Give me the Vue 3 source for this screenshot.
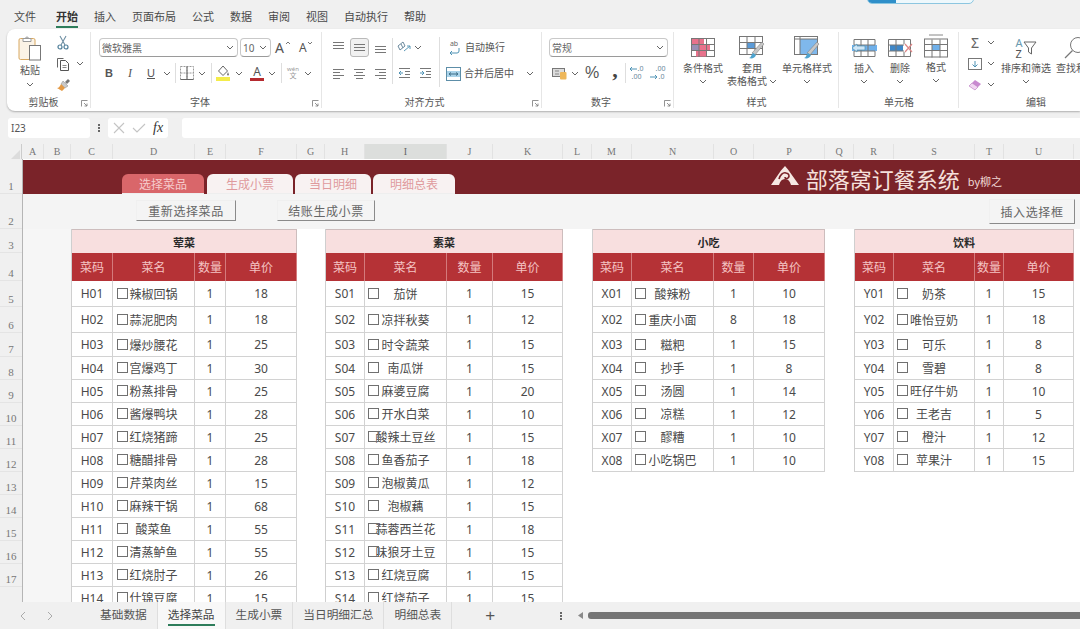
<script setup>
const menus = ['文件', '开始', '插入', '页面布局', '公式', '数据', '审阅', '视图', '自动执行', '帮助']
const columns = 'ABCDEFGHIJKLMNOPQRSTU'.split('')
const rowNumbers = Array.from({ length: 18 }, (_, i) => (i < 17 ? i + 1 : ''))
const heads = ['菜码', '菜名', '数量', '单价']
const sheetTabs = ['基础数据', '选择菜品', '生成小票', '当日明细汇总', '明细总表']

const tables = [
  { key: 't1', title: '荤菜', rows: [
    ['H01', '辣椒回锅', 1, 18], ['H02', '蒜泥肥肉', 1, 18], ['H03', '爆炒腰花', 1, 25], ['H04', '宫爆鸡丁', 1, 30],
    ['H05', '粉蒸排骨', 1, 25], ['H06', '酱爆鸭块', 1, 28], ['H07', '红烧猪蹄', 1, 25], ['H08', '糖醋排骨', 1, 28],
    ['H09', '芹菜肉丝', 1, 15], ['H10', '麻辣干锅', 1, 68], ['H11', '酸菜鱼', 1, 55], ['H12', '清蒸鲈鱼', 1, 55],
    ['H13', '红烧肘子', 1, 26], ['H14', '什锦豆腐', 1, 15] ] },
  { key: 't2', title: '素菜', rows: [
    ['S01', '茄饼', 1, 15], ['S02', '凉拌秋葵', 1, 12], ['S03', '时令蔬菜', 1, 15], ['S04', '南瓜饼', 1, 15],
    ['S05', '麻婆豆腐', 1, 20], ['S06', '开水白菜', 1, 10], ['S07', '酸辣土豆丝', 1, 15], ['S08', '鱼香茄子', 1, 18],
    ['S09', '泡椒黄瓜', 1, 12], ['S10', '泡椒藕', 1, 15], ['S11', '蒜蓉西兰花', 1, 18], ['S12', '味狼牙土豆', 1, 15],
    ['S13', '红烧豆腐', 1, 15], ['S14', '红烧茄子', 1, 15] ] },
  { key: 't3', title: '小吃', rows: [
    ['X01', '酸辣粉', 1, 10], ['X02', '重庆小面', 8, 18], ['X03', '糍粑', 1, 15], ['X04', '抄手', 1, 8],
    ['X05', '汤圆', 1, 14], ['X06', '凉糕', 1, 12], ['X07', '醪糟', 1, 10], ['X08', '小吃锅巴', 1, 10] ] },
  { key: 't4', title: '饮料', rows: [
    ['Y01', '奶茶', 1, 15], ['Y02', '唯怡豆奶', 1, 18], ['Y03', '可乐', 1, 8], ['Y04', '雪碧', 1, 8],
    ['Y05', '旺仔牛奶', 1, 10], ['Y06', '王老吉', 1, 5], ['Y07', '橙汁', 1, 12], ['Y08', '苹果汁', 1, 15] ] }
]
</script>

<template>
  <div class="app">
    <div class="toggle"><span class="toggle-on"></span></div>

    <nav class="menu">
      <span v-for="m in menus" :key="m" class="menu-item" :class="{ active: m === '开始' }">{{ m }}</span>
    </nav>

    <section class="ribbon">
      <!-- 剪贴板 -->
      <div class="group g1">
        <div class="gbody clip">
          <div class="paste">
            <svg width="24" height="26" viewBox="0 0 24 26"><rect x="1" y="3.5" width="16" height="21" rx="1.5" fill="#fbf3e6" stroke="#d8a860"/><path d="M5 3.500h8v3H5z" fill="#fff" stroke="#9a9a9a"/><path d="M7.500 3.500a1.500 1.500 0 0 1 3 0" fill="none" stroke="#9a9a9a"/><rect x="11.500" y="10.500" width="11" height="14.500" fill="#fff" stroke="#777"/></svg>
            <span class="lbl">粘贴</span>
            <svg class="chev" viewBox="0 0 8 5"><path d="M1 1l3 3 3-3"/></svg>
          </div>
          <div class="clip-tools">
            <div class="tool"><svg width="12" height="15" viewBox="0 0 12 15"><path d="M3 1l5 9M9 1L4 10" fill="none" stroke="#6f8fa3" stroke-width="1.100"/><circle cx="3" cy="12" r="2" fill="none" stroke="#4f7f9a" stroke-width="1.200"/><circle cx="9" cy="12" r="2" fill="none" stroke="#4f7f9a" stroke-width="1.200"/></svg></div>
            <div class="tool"><svg width="15" height="14" viewBox="0 0 15 14"><path d="M1.500 10.500v-9h6" fill="none" stroke="#666"/><path d="M4.500 3.500h5l3 3v7h-8z" fill="#fff" stroke="#555"/><path d="M6.500 8.500h4M6.500 10.500h4" stroke="#888"/></svg><svg class="chev" viewBox="0 0 8 5"><path d="M1 1l3 3 3-3"/></svg></div>
            <div class="tool"><svg width="15" height="14" viewBox="0 0 15 14"><path d="M9 4l3-3 2 2-3 3z" fill="#777"/><path d="M7 3l5 5-3 2-4-4z" fill="#c9c9c9" stroke="#888" stroke-width=".5"/><path d="M5 6l4 4-3 3-5-3c2 0 3-2 4-4z" fill="#e49a45"/></svg></div>
          </div>
        </div>
        <div class="glabel">剪贴板<svg class="launch" viewBox="0 0 7 7"><path d="M.5 6.500v-6h6M3 3l3 3M6 3.500V6H3.500"/></svg></div>
      </div>

      <!-- 字体 -->
      <div class="group g2">
        <div class="gbody stack">
          <div class="row-font">
            <div class="select s-font"><span>微软雅黑</span><svg class="chev" viewBox="0 0 8 5"><path d="M1 1l3 3 3-3"/></svg></div>
            <div class="select s-size"><span>10</span><svg class="chev" viewBox="0 0 8 5"><path d="M1 1l3 3 3-3"/></svg></div>
            <span class="grow-a big">A<svg class="caret" viewBox="0 0 6 4"><path d="M1 3l2-2 2 2"/></svg></span>
            <span class="grow-a small">A<svg class="caret" viewBox="0 0 6 4"><path d="M1 1l2 2 2-2"/></svg></span>
          </div>
          <div class="grid-font">
            <b class="fmt">B</b>
            <i class="fmt ital">I</i>
            <u class="fmt">U</u>
            <svg class="chev" viewBox="0 0 8 5"><path d="M1 1l3 3 3-3"/></svg>
            <span class="vsep"></span>
            <svg width="14" height="14" viewBox="0 0 14 14"><path d="M.5.500h13v13H.500zM7 .500v13M.500 7h13" fill="none" stroke="#999" stroke-dasharray="2 1"/><path d="M.5 13.500h13M7 .500v13" stroke="#666" fill="none"/></svg>
            <svg class="chev" viewBox="0 0 8 5"><path d="M1 1l3 3 3-3"/></svg>
            <span class="vsep"></span>
            <svg width="14" height="16" viewBox="0 0 14 16"><path d="M7 1l4.500 5L7 10.500 2.500 6z" fill="#fff" stroke="#666"/><path d="M12 7l1 2.500a1 1 0 0 1-2 0z" fill="#777"/><rect x="0" y="12" width="14" height="4" fill="#f4ec4a"/></svg>
            <svg class="chev" viewBox="0 0 8 5"><path d="M1 1l3 3 3-3"/></svg>
            <span class="color-a">A<em></em></span>
            <svg class="chev" viewBox="0 0 8 5"><path d="M1 1l3 3 3-3"/></svg>
            <span class="vsep"></span>
            <span class="wen"><small>wén</small>文</span>
            <svg class="chev" viewBox="0 0 8 5"><path d="M1 1l3 3 3-3"/></svg>
          </div>
        </div>
        <div class="glabel">字体<svg class="launch" viewBox="0 0 7 7"><path d="M.5 6.500v-6h6M3 3l3 3M6 3.500V6H3.500"/></svg></div>
      </div>

      <!-- 对齐方式 -->
      <div class="group g3">
        <div class="gbody align">
          <div class="grid-align">
            <svg class="al" viewBox="0 0 13 13"><path d="M1 1.500h11M1 4.500h11M1 7.500h11"/></svg>
            <span class="al-on"><svg class="al" viewBox="0 0 13 13"><path d="M1 3.500h11M1 6.500h11M1 9.500h11"/></svg></span>
            <svg class="al" viewBox="0 0 13 13"><path d="M1 5.500h11M1 8.500h11M1 11.500h11"/></svg>
            <span class="vsep tall"></span>
            <svg width="15" height="13" viewBox="0 0 15 13"><path d="M1 5l5-4 2 4-5 4zM4 3l2 4" fill="none" stroke="#6c8a9e"/><path d="M7 10l6-5M13 5h-3M13 5v3" fill="none" stroke="#5d9ab8"/></svg>
            <svg class="chev start" viewBox="0 0 8 5"><path d="M1 1l3 3 3-3"/></svg>
            <svg class="al" viewBox="0 0 13 13"><path d="M1 2.500h11M1 5.500h7M1 8.500h11M1 11.500h7"/></svg>
            <svg class="al" viewBox="0 0 13 13"><path d="M1 2.500h11M3 5.500h7M1 8.500h11M3 11.500h7"/></svg>
            <svg class="al" viewBox="0 0 13 13"><path d="M1 2.500h11M5 5.500h7M1 8.500h11M5 11.500h7"/></svg>
            <svg class="al" viewBox="0 0 13 13"><path d="M1 1.500h11M7 4.500h5M7 7.500h5M1 10.500h11"/><path class="blue" d="M5 6H1M1 6l2-2M1 6l2 2"/></svg>
            <svg class="al" viewBox="0 0 13 13"><path d="M1 1.500h11M7 4.500h5M7 7.500h5M1 10.500h11"/><path class="blue" d="M1 6h4M5 6L3 4M5 6L3 8"/></svg>
          </div>
          <span class="vsep tall-2"></span>
          <div class="wrap-col">
            <div class="wrap-row"><span class="wrap-ic"><small>ab</small><svg width="13" height="7" viewBox="0 0 13 7"><path d="M11 0v3a2 2 0 0 1-2 2H2M2 5l2-2M2 5l2 2" fill="none" stroke="#4f93b5"/></svg></span><span class="lbl">自动换行</span></div>
            <div class="wrap-row"><svg width="15" height="14" viewBox="0 0 15 14"><rect x=".5" y=".5" width="14" height="13" fill="#fff" stroke="#5d8ea8"/><rect x="1" y="4" width="13" height="6" fill="#a9d3ea"/><path d="M3 7h9M3 7l2-1.500M3 7l2 1.500M12 7l-2-1.500M12 7l-2 1.500" fill="none" stroke="#3f6f88"/></svg><span class="lbl">合并后居中</span><svg class="chev ml" viewBox="0 0 8 5"><path d="M1 1l3 3 3-3"/></svg></div>
          </div>
        </div>
        <div class="glabel">对齐方式<svg class="launch" viewBox="0 0 7 7"><path d="M.5 6.500v-6h6M3 3l3 3M6 3.500V6H3.500"/></svg></div>
      </div>

      <!-- 数字 -->
      <div class="group g4">
        <div class="gbody stack">
          <div class="select s-num"><span>常规</span><svg class="chev" viewBox="0 0 8 5"><path d="M1 1l3 3 3-3"/></svg></div>
          <div class="grid-num">
            <svg width="15" height="13" viewBox="0 0 15 13"><rect x=".5" y="1.500" width="12" height="8" fill="#dcdcdc" stroke="#777"/><path d="M3 4h4M3 7h4" stroke="#888"/><rect x="8" y="5" width="6.500" height="7.500" rx="1" fill="#eeb75a"/></svg>
            <svg class="chev" viewBox="0 0 8 5"><path d="M1 1l3 3 3-3"/></svg>
            <span class="pct">%</span>
            <span class="comma">,</span>
            <span class="vsep"></span>
            <span class="dec"><svg width="8" height="6" viewBox="0 0 8 6"><path d="M8 3H1M1 3l2-2M1 3l2 2" fill="none" stroke="#4f93b5"/></svg><small>.0</small><small class="low">.00</small></span>
            <span class="dec"><small class="hi">.00</small><svg width="8" height="6" viewBox="0 0 8 6"><path d="M0 3h7M7 3L5 1M7 3L5 5" fill="none" stroke="#4f93b5"/></svg><small>.0</small></span>
          </div>
        </div>
        <div class="glabel">数字<svg class="launch" viewBox="0 0 7 7"><path d="M.5 6.500v-6h6M3 3l3 3M6 3.500V6H3.500"/></svg></div>
      </div>

      <!-- 样式 -->
      <div class="group g5">
        <div class="gbody bigs">
          <div class="bigbtn w48">
            <svg width="24" height="20" viewBox="0 0 24 20"><rect x=".5" y=".5" width="23" height="18" fill="#fff" stroke="#777"/><rect x="1" y="1" width="12" height="5.500" fill="#e8728c"/><rect x="1" y="6.500" width="7" height="6" fill="#9a8fb5"/><rect x="8" y="6.500" width="11" height="6" fill="#e8728c"/><rect x="5" y="12.500" width="10" height="6" fill="#e8728c"/><path d="M8 1v18M15.500 1v18M1 6.500h22M1 12.500h22" stroke="#777" fill="none"/></svg>
            <span class="lbl">条件格式</span>
            <svg class="chev" viewBox="0 0 8 5"><path d="M1 1l3 3 3-3"/></svg>
          </div>
          <div class="bigbtn w50">
            <svg width="26" height="24" viewBox="0 0 26 24"><rect x=".5" y=".5" width="23" height="18" fill="#fff" stroke="#777"/><rect x="8" y="6.500" width="8" height="6" fill="#5b9bd8"/><path d="M8 1v18M16 1v18M1 6.500h22M1 12.500h22" stroke="#777" fill="none"/><path d="M13 17l10-11 2 2-9 11z" fill="#c7c7c7" stroke="#777" stroke-width=".5"/><path d="M10 22c2 0 2-3 4-5l3 2c-1 3-4 4-7 3z" fill="#4da3cf"/></svg>
            <span class="lbl">套用</span>
            <span class="lbl tail">表格格式<svg class="chev" viewBox="0 0 8 5"><path d="M1 1l3 3 3-3"/></svg></span>
          </div>
          <div class="bigbtn w60">
            <svg width="26" height="24" viewBox="0 0 26 24"><rect x=".5" y=".5" width="23" height="18" fill="#fff" stroke="#777"/><rect x="6" y="3" width="17" height="15" fill="#7fb8ec"/><path d="M6 1v18M1 3h22" stroke="#777" fill="none"/><path d="M13 17l10-11 2 2-9 11z" fill="#c7c7c7" stroke="#777" stroke-width=".5"/><path d="M10 22c2 0 2-3 4-5l3 2c-1 3-4 4-7 3z" fill="#4da3cf"/></svg>
            <span class="lbl">单元格样式</span>
            <svg class="chev" viewBox="0 0 8 5"><path d="M1 1l3 3 3-3"/></svg>
          </div>
        </div>
        <div class="glabel">样式</div>
      </div>

      <!-- 单元格 -->
      <div class="group g6">
        <div class="gbody bigs">
          <div class="bigbtn w36">
            <svg width="27" height="20" viewBox="0 0 27 20"><path d="M3 1.500h21v17H3z" fill="#fff" stroke="#777"/><rect x="1" y="7" width="25" height="6" fill="#6fb0ea"/><path d="M10 1v18M17 1v18M3 7h21M3 13h21" stroke="#777" fill="none"/><path d="M1 10l5-4v2h8v4H6v2z" fill="#cfe6f7" stroke="#4f93b5" stroke-width=".7"/></svg>
            <span class="lbl">插入</span>
            <svg class="chev" viewBox="0 0 8 5"><path d="M1 1l3 3 3-3"/></svg>
          </div>
          <div class="bigbtn w36">
            <svg width="27" height="20" viewBox="0 0 27 20"><path d="M1.500 1.500h22v17h-22z" fill="#fff" stroke="#777"/><rect x="3" y="7" width="13" height="6" fill="#3f87c8"/><path d="M9 1v18M17 1v5M17 14v5M1 7h16M1 13h16" stroke="#777" fill="none"/><path d="M18 6l7 8M25 6l-7 8" stroke="#d88" stroke-width="1.200" fill="none"/></svg>
            <span class="lbl">删除</span>
            <svg class="chev" viewBox="0 0 8 5"><path d="M1 1l3 3 3-3"/></svg>
          </div>
          <div class="bigbtn w36 up">
            <svg width="24" height="23" viewBox="0 0 24 23"><path d="M5 .500h14" stroke="#888"/><rect x=".5" y="4.500" width="23" height="18" fill="#fff" stroke="#777"/><rect x="8" y="10" width="8" height="6" fill="#6fb0ea"/><path d="M8 5v18M16 5v18M1 10h22M1 16h22" stroke="#777" fill="none"/></svg>
            <span class="lbl">格式</span>
            <svg class="chev" viewBox="0 0 8 5"><path d="M1 1l3 3 3-3"/></svg>
          </div>
        </div>
        <div class="glabel">单元格</div>
      </div>

      <!-- 编辑 -->
      <div class="group g7">
        <div class="gbody bigs">
          <div class="edit-tools">
            <div class="tool"><span class="sigma">Σ</span><svg class="chev" viewBox="0 0 8 5"><path d="M1 1l3 3 3-3"/></svg></div>
            <div class="tool"><svg width="14" height="12" viewBox="0 0 14 12"><rect x=".5" y=".5" width="13" height="11" fill="#fff" stroke="#777"/><path d="M7 3v6M7 9L4.500 6.500M7 9l2.500-2.500" fill="none" stroke="#4f93b5"/></svg><svg class="chev" viewBox="0 0 8 5"><path d="M1 1l3 3 3-3"/></svg></div>
            <div class="tool"><svg width="14" height="12" viewBox="0 0 14 12"><path d="M1 7l6-6 6 4-6 6z" fill="#c98ad0"/><path d="M4 4l6 4-3 3-6-4z" fill="#f2d6f2" stroke="#b67abf" stroke-width=".5"/></svg><svg class="chev" viewBox="0 0 8 5"><path d="M1 1l3 3 3-3"/></svg></div>
          </div>
          <div class="bigbtn w50">
            <span class="sort"><span class="az"><i>A</i><i class="z">Z</i></span><svg width="14" height="15" viewBox="0 0 14 15"><path d="M1 1h12L8.500 7v6l-3-2V7z" fill="#fff" stroke="#666"/></svg></span>
            <span class="lbl">排序和筛选</span>
            <svg class="chev" viewBox="0 0 8 5"><path d="M1 1l3 3 3-3"/></svg>
          </div>
          <div class="bigbtn search">
            <svg width="24" height="24" viewBox="0 0 24 24"><circle cx="15" cy="9" r="7.500" fill="none" stroke="#777"/><path d="M9.500 14.500L2 22" stroke="#777" stroke-width="1.200"/></svg>
            <span class="lbl">查找和选择</span>
          </div>
        </div>
        <div class="glabel">编辑</div>
      </div>
    </section>

    <div class="formula">
      <div class="namebox">I23</div>
      <span class="dots"><i></i><i></i><i></i></span>
      <div class="fbtns">
        <svg width="12" height="12" viewBox="0 0 12 12"><path d="M1 1l10 10M11 1L1 11" stroke="#c4c4c4" stroke-width="1.100"/></svg>
        <svg width="14" height="12" viewBox="0 0 14 12"><path d="M1 6l4 4 8-8" fill="none" stroke="#c4c4c4" stroke-width="1.100"/></svg>
        <span class="fx">fx</span>
      </div>
      <div class="finput"></div>
    </div>

    <div class="colhead">
      <div class="corner"><svg width="10" height="10" viewBox="0 0 10 10"><path d="M10 0v10H0z" fill="#dcdcdc"/></svg></div>
      <div v-for="c in columns" :key="c" class="col" :class="{ sel: c === 'I' }">{{ c }}</div>
    </div>

    <div class="sheet">
      <div class="rowhead">
        <div v-for="(n, i) in rowNumbers" :key="i" class="rownum">{{ n }}</div>
      </div>
      <div class="canvas">
        <header class="banner">
          <div class="btabs">
            <span class="btab on">选择菜品</span>
            <span class="btab b2">生成小票</span>
            <span class="btab b3">当日明细</span>
            <span class="btab b4">明细总表</span>
          </div>
          <div class="brand">
            <svg width="28" height="20" viewBox="0 0 28 20"><path d="M14 0l3 3.500 11 15.500h-8c-1-4-3-6-6-6s-5 2-6 6H0L10 4.500z" fill="#f6e7e2"/><path d="M8 13c1-4 4-7 7-6 3 .5 4 3 2 5-1 1-3 1-3-1" fill="none" stroke="#7a2228" stroke-width="1.600"/></svg>
            <span class="brand-name">部落窝订餐系统</span>
            <span class="brand-by">by柳之</span>
          </div>
        </header>
        <div class="actions">
          <button class="act a1">重新选择菜品</button>
          <button class="act a2">结账生成小票</button>
          <button class="act a3">插入选择框</button>
        </div>
        <div class="tables">
          <div class="leftpad"></div>
          <div v-for="t in tables" :key="t.key" class="tbl" :class="t.key">
            <div class="title">{{ t.title }}</div>
            <div v-for="h in heads" :key="h" class="th">{{ h }}</div>
            <template v-for="r in t.rows" :key="r[0]">
              <div class="td">{{ r[0] }}</div>
              <div class="td name"><span class="check"></span>{{ r[1] }}</div>
              <div class="td">{{ r[2] }}</div>
              <div class="td">{{ r[3] }}</div>
            </template>
          </div>
        </div>
      </div>
    </div>

    <footer class="tabsbar">
      <svg class="nav n1" viewBox="0 0 6 10"><path d="M5 1L1 5l4 4"/></svg>
      <svg class="nav n2" viewBox="0 0 6 10"><path d="M1 1l4 4-4 4"/></svg>
      <div class="stabs">
        <span v-for="s in sheetTabs" :key="s" class="stab" :class="{ cur: s === '选择菜品' }"><span class="stab-t">{{ s }}</span></span>
      </div>
      <span class="plus">+</span>
      <span class="dots v2"><i></i><i></i><i></i></span>
      <svg class="scroll-arrow" width="5" height="7" viewBox="0 0 5 7"><path d="M5 0v7L0 3.500z" fill="#8a8a8a"/></svg>
      <div class="thumb"></div>
    </footer>
  </div>
</template>

<style>
html, body { margin: 0; background: #f0f0f0; }
</style>

<style scoped>
.app {
  position: relative;
  width: 1080px;
  height: 629px;
  overflow: hidden;
  background: #f0f0f0;
  display: flex;
  flex-direction: column;
  color: #4a4a4a;
  font-family: "Noto Sans", "Noto Sans CJK SC", sans-serif;
}
.toggle {
  position: absolute;
  left: 867px;
  top: -3px;
  width: 105px;
  height: 5px;
  border: 1px solid #8cc6e0;
  border-radius: 0 0 5px 5px;
  overflow: hidden;
  background: #eef8fc;
}
.toggle-on { display: block; width: 28px; height: 100%; background: #2f8fc9; }

/* menu */
.menu { height: 29px; flex: none; display: flex; align-items: flex-start; padding-left: 14px; gap: 16px; box-sizing: border-box; padding-top: 9px; }
.menu-item { font-size: 11px; line-height: 15px; height: 17px; color: #4a4a4a; }
.menu-item:first-child { margin-right: 4px; }
.menu-item.active { font-weight: 700; color: #333; border-bottom: 2px solid #2e7d5b; }

/* ribbon */
.ribbon {
  flex: none;
  height: 82px;
  margin-left: 7px;
  background: #fff;
  border-radius: 8px 0 0 8px;
  box-shadow: 0 1px 2px rgba(0,0,0,.28);
  display: flex;
  overflow: hidden;
}
.group { flex: none; box-sizing: border-box; margin-top: 3px; height: 76px; border-right: 1px solid #e6e6e6; display: flex; flex-direction: column; }
.g1 { width: 84px; }
.g2 { width: 231px; padding-left: 8px; }
.g3 { width: 220px; padding-left: 6px; }
.g4 { width: 132px; padding-left: 7px; }
.g5 { width: 165px; padding-left: 5px; }
.g6 { width: 120px; padding-left: 7px; }
.g7 { width: 160px; padding-left: 6px; border-right: 0; }
.gbody { height: 63px; flex: none; box-sizing: border-box; }
.stack { padding-top: 6px; display: flex; flex-direction: column; gap: 6px; }
.glabel { position: relative; height: 14px; line-height: 14px; font-size: 10px; text-align: center; color: #555; box-sizing: border-box; }
.launch { position: absolute; right: 2px; top: 5px; width: 7px; height: 7px; fill: none; stroke: #777; stroke-width: .8; }
.g1 .glabel { padding-right: 10px; }
.g2 .glabel, .g3 .glabel, .g4 .glabel { margin-left: -8px; padding-right: 12px; }
.g5 .glabel { padding-right: 4px; }
.g6 .glabel { padding-right: 6px; }
.g7 .glabel { margin-right: 12px; }
.chev { width: 8px; height: 5px; fill: none; stroke: #666; stroke-width: 1; flex: none; }
.lbl { font-size: 10px; line-height: 13px; color: #555; white-space: nowrap; }
.vsep { display: block; width: 1px; height: 20px; background: #dedede; }

.clip { display: flex; }
.paste { width: 46px; display: flex; flex-direction: column; align-items: center; padding-top: 2px; box-sizing: border-box; }
.paste svg:first-child { margin-top: 1px; }
.paste .lbl { margin-top: 3px; }
.paste .chev { margin-top: 5px; }
.clip-tools, .edit-tools { display: flex; flex-direction: column; }
.clip-tools .tool, .edit-tools .tool { height: 21px; display: flex; align-items: center; gap: 5px; }
.clip-tools { padding-left: 3px; }
.clip-tools .tool:first-child { padding-left: 1px; }

.row-font { display: flex; align-items: center; height: 19px; }
.select {
  box-sizing: border-box; height: 19px; background: #fff;
  border: 1px solid #c9c9c9; border-bottom-color: #9a9a9a; border-radius: 4px;
  display: flex; align-items: center; justify-content: space-between;
  padding: 0 3px 0 2px; font-size: 10px; color: #666;
}
.s-font { width: 139px; }
.s-size { width: 31px; margin-left: 2px; }
.s-num { width: 119px; flex: none; }
.grow-a { position: relative; display: inline-block; color: #555; line-height: 16px; }
.grow-a.big { font-size: 14px; margin-left: 4px; width: 16px; }
.grow-a.small { font-size: 12px; margin-left: 8px; width: 14px; }
.caret { position: absolute; top: 1px; right: 0; width: 6px; height: 4px; fill: none; stroke: #777; }

.grid-font {
  display: grid;
  grid-template-columns: 20px 22px 20px 12px 4px 20px 10px 8px 16px 16px 20px 10px 8px 16px 14px;
  align-items: center; justify-items: center; height: 20px;
}
.fmt { font-size: 11px; font-style: normal; color: #555; font-family: "Liberation Sans", sans-serif; }
.ital { font-style: italic; font-family: "Liberation Serif", serif; font-size: 12px; }
.color-a { display: flex; flex-direction: column; align-items: center; font-size: 12px; line-height: 12px; color: #555; }
.color-a em { display: block; width: 14px; height: 3px; background: #b52a2f; }
.wen { display: flex; flex-direction: column; align-items: center; font-size: 7px; line-height: 8px; color: #999; }
.wen small { font-size: 6px; line-height: 6px; }

.align { display: flex; padding-top: 6px; }
.grid-align { display: grid; grid-template-columns: 21px 21px 21px 3px 20px 22px; grid-template-rows: 19px 20px; row-gap: 6px; justify-items: center; align-items: center; width: 108px; flex: none; }
.al { width: 13px; height: 13px; fill: none; stroke: #777; stroke-width: 1; }
.al .blue { stroke: #4f93b5; }
.al-on { width: 19px; height: 19px; box-sizing: border-box; border: 1px solid #b9b9b9; border-radius: 3px; background: #f1f1f1; display: flex; align-items: center; justify-content: center; }
.vsep.tall { grid-column: 4; grid-row: 1 / 3; height: 46px; }
.chev.start { justify-self: start; margin-left: 0; }
.vsep.tall-2 { height: 50px; margin: -1px 0 0 3px; flex: none; }
.wrap-col { margin-left: 6px; display: flex; flex-direction: column; gap: 7px; }
.wrap-row { display: flex; align-items: center; height: 19px; gap: 3px; }
.wrap-ic { width: 16px; display: flex; flex-direction: column; align-items: center; }
.wrap-ic small { font-size: 7px; line-height: 8px; color: #666; }
.ml { margin-left: 9px; }

.grid-num { display: grid; grid-template-columns: 20px 11px 24px 20px 3px 21px 21px; justify-items: center; align-items: center; height: 20px; }
.pct { font-size: 16px; color: #555; font-family: "Liberation Sans", sans-serif; }
.comma { font-size: 22px; font-weight: 700; line-height: 14px; height: 20px; color: #444; font-family: "Liberation Serif", serif; margin-left: 2px; }
.dec { display: grid; grid-template-columns: 8px 8px; justify-items: center; align-items: center; width: 18px; line-height: 7px; }
.dec small { font-size: 7px; line-height: 8px; color: #6a8a9c; }
.dec .low { grid-column: 1 / 3; }
.dec .hi { grid-column: 1 / 3; justify-self: end; }

.bigs { display: flex; }
.bigbtn { flex: none; display: flex; flex-direction: column; align-items: center; padding-top: 4px; box-sizing: border-box; }
.bigbtn > svg:first-child, .sort { height: 24px; margin-bottom: 2px; display: block; }
.bigbtn .chev { margin-top: 4px; }
.bigbtn.up > svg:first-child { margin-top: -2px; margin-bottom: 3px; }
.w48 { width: 48px; }
.w50 { width: 50px; }
.w60 { width: 60px; }
.w36 { width: 36px; }
.search { width: 50px; margin-left: 5px; }
.search > svg:first-child { margin-right: 12px; }
.tail { display: flex; align-items: center; gap: 2px; }
.tail .chev { margin-top: 0; }
.edit-tools { width: 36px; padding-left: 3px; box-sizing: border-box; }
.edit-tools .tool { justify-content: flex-start; }
.sigma { font-size: 14px; line-height: 14px; color: #666; width: 14px; text-align: center; }
.sort { display: flex; align-items: center; }
.az { display: flex; flex-direction: column; font-size: 11px; line-height: 11px; color: #6a9ab0; }
.az i { font-style: normal; }
.az .z { color: #555; }

/* formula */
.formula { flex: none; height: 21px; margin-top: 6px; display: flex; align-items: center; padding-left: 8px; }
.namebox { width: 82px; height: 20px; background: #fff; border-radius: 3px; font-size: 10px; line-height: 20px; padding-left: 3px; box-sizing: border-box; color: #555; }
.dots { display: flex; flex-direction: column; gap: 1px; width: 2px; margin: 0 8px 0 8px; }
.dots i { display: block; width: 2px; height: 2px; background: #666; }
.fbtns { width: 60px; height: 20px; background: #fff; box-sizing: border-box; border-radius: 3px; display: flex; align-items: center; gap: 7px; padding-left: 5px; margin-right: 14px; }
.fx { font-family: "Liberation Serif", serif; font-style: italic; font-size: 14px; color: #333; }
.finput { flex: 1; height: 20px; background: #fff; border-radius: 3px 0 0 3px; }

/* column header */
.colhead {
  flex: none; height: 15px; margin-top: 6px; display: grid;
  grid-template-columns: 22px 22px 27px 42px 82px 31px 71px 28px 40px 82px 46px 70px 29px 40px 82px 40px 71px 29px 40px 81px 29px 70px 6px;
  font-family: "Liberation Serif", serif; font-size: 10px; line-height: 15px; color: #777; text-align: center;
}
.corner { display: flex; justify-content: flex-end; align-items: flex-end; padding-right: 1px; border-right: 1px solid #ccc; }
.col { border-right: 1px solid #e2e2e2; box-sizing: border-box; }
.col.sel { background: #dcdedc; border-bottom: 1px solid #8fa88f; color: #666; }

/* sheet */
.sheet { flex: none; height: 443px; display: flex; overflow: hidden; background: #fff; }
.rowhead {
  flex: none; width: 23px; box-sizing: border-box; border-right: 1px solid #b5b5b5; background: #f0f0f0;
  display: grid; grid-template-rows: 35px 35px 24px 28px 26px 26px 24px repeat(11, 23px);
  font-family: "Liberation Serif", serif; font-size: 11px; color: #777;
}
.rownum { display: flex; align-items: flex-end; justify-content: center; padding-bottom: 1px; box-sizing: border-box; border-bottom: 1px solid #e4e4e4; line-height: 12px; }
.canvas { flex: 1; min-width: 0; display: flex; flex-direction: column; }

.banner { flex: none; box-sizing: border-box; margin-top: 1px; height: 34px; background: #7a2329; display: flex; align-items: flex-end; justify-content: space-between; padding: 0 78px 0 99px; }
.btabs { display: flex; height: 20px; }
.btab { box-sizing: border-box; height: 20px; border-radius: 6px 6px 0 0; background: #f8f2f2; color: #df9a9d; font-size: 12px; line-height: 21px; text-align: center; border-bottom: 1px solid #eee; }
.btab.on { width: 82px; background: #d9666a; color: #f6cccc; }
.btab.b2 { width: 86px; margin-left: 3px; }
.btab.b3 { width: 76px; margin-left: 2px; }
.btab.b4 { width: 82px; margin-left: 2px; }
.brand { display: flex; align-items: center; align-self: stretch; }
.brand svg { margin-top: -2px; }
.brand-name { font-size: 22px; line-height: 30px; color: #f5e0dc; margin: 3px 0 0 7px; white-space: nowrap; }
.brand-by { font-size: 11px; color: #f0d8d4; margin: 8px 0 0 8px; white-space: nowrap; }

.actions { flex: none; height: 35px; background: #f4f4f4; display: flex; align-items: flex-start; }
.act {
  box-sizing: border-box; padding: 0; background: #f4f4f4; font-family: inherit; font-size: 12px; color: #666; letter-spacing: .6px;
  border: 0; border-right: 1px solid #8a8a8a; border-bottom: 1px solid #8a8a8a; border-top: 1px solid #efefef; border-left: 1px solid #f0f0f0;
  white-space: nowrap;
}
.a1 { width: 100px; height: 21px; margin: 6px 0 0 113px; }
.a2 { width: 98px; height: 21px; margin: 6px 0 0 41px; }
.a3 { width: 86px; height: 25px; margin: 5px 0 0 614px; }

.tables { flex: 1; min-height: 0; display: flex; align-items: flex-start; background: #fff; overflow: hidden; }
.leftpad { flex: none; width: 48px; align-self: stretch; background: #f6f6f6; }
.tbl {
  flex: none; display: grid;
  grid-template-rows: 24px 28px 26px 26px 24px;
  grid-auto-rows: 23px;
  border-left: 1px solid #cfcfcf;
  box-sizing: border-box;
}
.t1 { grid-template-columns: 41px 82px 31px 71px; }
.t2 { grid-template-columns: 39px 82px 46px 70px; margin-left: 28px; }
.t3 { grid-template-columns: 39px 82px 40px 71px; margin-left: 29px; }
.t4 { grid-template-columns: 39px 81px 29px 70px; margin-left: 29px; }
.title {
  grid-column: 1 / -1; background: #f8dfdf; color: #2a2a2a; font-weight: 700; font-size: 11px;
  display: flex; align-items: center; justify-content: center;
  border-top: 1px solid #cdbdbd; border-right: 1px solid #cdbdbd; box-sizing: border-box;
}
.th {
  background: #b53236; color: #f4c3c3; font-size: 12px; display: flex; align-items: center; justify-content: center;
  border-right: 1px solid #d47a7c; box-sizing: border-box;
}
.td {
  position: relative; background: #fff; font-size: 12px; color: #4a4a4a;
  display: flex; align-items: center; justify-content: center;
  border-right: 1px solid #d2d2d2; border-bottom: 1px solid #d2d2d2; box-sizing: border-box; white-space: nowrap;
}
.check { position: absolute; left: 3px; top: 50%; margin-top: -6px; width: 11px; height: 11px; box-sizing: border-box; border: 1px solid #707070; background: transparent; }
.t1 .check { left: 4px; }

/* bottom */
.tabsbar { flex: 1; position: relative; display: flex; align-items: center; background: #f0f0f0; min-height: 0; }
.nav { position: absolute; top: 9px; width: 6px; height: 10px; fill: none; stroke: #aaa; stroke-width: 1; }
.n1 { left: 20px; }
.n2 { left: 47px; }
.stabs { display: flex; margin-left: 90px; align-self: stretch; }
.stab { font-size: 11.7px; color: #555; padding: 0 10px; display: flex; align-items: center; border-right: 1px solid #dedede; white-space: nowrap; }
.stab.cur { background: #f8f8f8; }
.stab-t { display: block; line-height: 19px; margin-top: -2px; }
.stab.cur .stab-t { border-bottom: 2px solid #2e7d5b; margin-top: 0; color: #444; }
.plus { margin-left: 33px; font-size: 17px; line-height: 17px; color: #555; font-family: "Liberation Sans", sans-serif; }
.dots.v2 { margin: 0 0 0 65px; }
.scroll-arrow { margin-left: 16px; flex: none; }
.thumb { flex: 1; height: 7px; margin-left: 5px; background: #757575; border-radius: 3px 0 0 3px; }
</style>
